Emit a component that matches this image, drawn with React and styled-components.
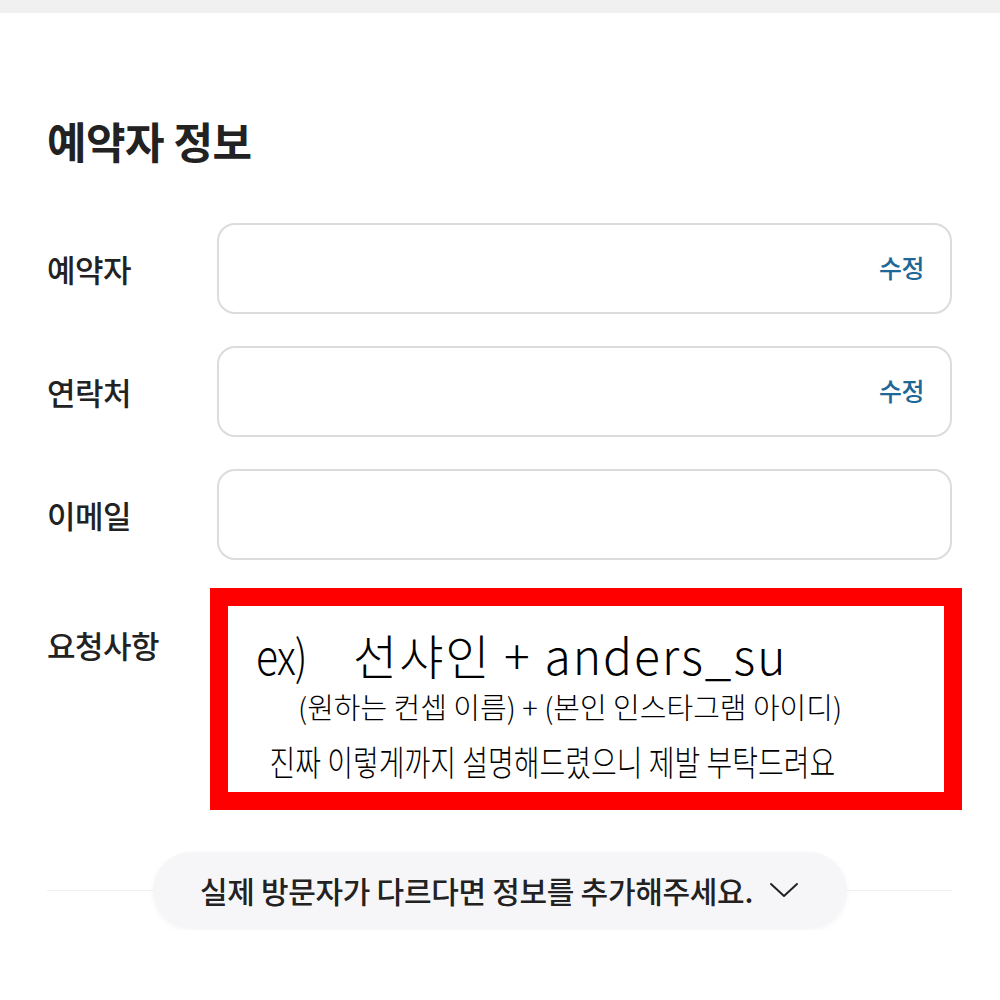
import React from 'react';
import styled, { createGlobalStyle } from 'styled-components';

const GlobalStyle = createGlobalStyle`
  html, body {
    margin: 0;
    padding: 0;
    background: #fff;
    font-family: "Noto Sans CJK KR", "Noto Sans", sans-serif;
    color: #222;
  }
`

const TopBar = styled.div`
  height: 13px;
  background: #f0f0f0;
`

const Page = styled.div`
  padding: 0 48px 0 47px;
`

const Title = styled.h2`
  margin: 0;
  padding-top: 98px;
  font-size: 43px;
  font-weight: 700;
  line-height: 58px;
  letter-spacing: -0.5px;
  color: #222;
`

const Form = styled.div`
  display: flex;
  flex-direction: column;
  gap: 32px;
  margin-top: 54px;
`

const Row = styled.div`
  display: grid;
  grid-template-columns: 170px 1fr;
  align-items: ${p => (p.$top ? 'start' : 'center')};
`

const Label = styled.div`
  font-size: 31px;
  font-weight: 500;
  letter-spacing: -0.5px;
  color: #222;
  padding-top: ${p => p.$pad || 0}px;
`

const Field = styled.div`
  height: 87px;
  border: 2px solid #dcdcdc;
  border-radius: 18px;
  display: flex;
  align-items: center;
  justify-content: flex-end;
  padding: 0 26px;
`

const EditLink = styled.span`
  font-size: 25px;
  font-weight: 500;
  color: #1d6896;
  letter-spacing: -0.5px;
  margin-top: -4px;
`

const Overlay = styled.div`
  margin: -4px -10px 0 -7px;
  border: 18px solid #ff0000;
  background: #fff;
  height: 186px;
  font-family: "Noto Sans CJK KR", sans-serif;
  font-weight: 300;
  color: #000;
  overflow: hidden;
`

const ExLine = styled.div`
  display: flex;
  align-items: baseline;
  padding: 22px 0 0 28px;
  font-size: 48px;
  line-height: 52px;
  white-space: nowrap;
`

const Ex = styled.span`
  font-size: 48px;
  font-weight: 300;
  display: inline-block;
  width: 97px;
  transform: scaleX(0.85);
  transform-origin: left;
  letter-spacing: -1px;
`

const Main = styled.span`
  letter-spacing: 2px;
`

const Sub = styled.div`
  padding-left: ${p => p.$left}px;
  font-size: ${p => p.$size}px;
  line-height: ${p => p.$lh}px;
  white-space: nowrap;
  transform: scaleX(${p => p.$sx || 1});
  transform-origin: left;
`

const Divider = styled.div`
  position: relative;
  margin-top: 40px;
  height: 80px;
  display: flex;
  justify-content: center;
  align-items: center;
  &::before {
    content: '';
    position: absolute;
    left: 0;
    right: 0;
    top: 50%;
    border-top: 1px solid #f0f0f0;
  }
`

const MoreButton = styled.button`
  position: relative;
  height: 77px;
  width: 694px;
  border: none;
  border-radius: 39px;
  background: #f6f6f8;
  box-shadow: 0 2px 6px rgba(0, 0, 0, 0.04);
  display: flex;
  align-items: center;
  justify-content: center;
  gap: 16px;
  font-family: "Noto Sans CJK KR", sans-serif;
  font-size: 30px;
  font-weight: 500;
  letter-spacing: -0.3px;
  color: #222;
  cursor: pointer;
`

const Chevron = () => (
  <svg width="30" height="18" viewBox="0 0 30 18" fill="none">
    <path d="M2 3 L15 15 L28 3" stroke="#222" strokeWidth="2" strokeLinecap="round" strokeLinejoin="round" />
  </svg>
)

export default function App() {
  return (
    <>
      <GlobalStyle />
      <TopBar />
      <Page>
        <Title>예약자 정보</Title>
        <Form>
          <Row>
            <Label>예약자</Label>
            <Field><EditLink>수정</EditLink></Field>
          </Row>
          <Row>
            <Label>연락처</Label>
            <Field><EditLink>수정</EditLink></Field>
          </Row>
          <Row>
            <Label>이메일</Label>
            <Field />
          </Row>
          <Row $top>
            <Label $pad={30}>요청사항</Label>
            <Overlay>
              <ExLine>
                <Ex>ex)</Ex>
                <Main>선샤인 + anders_su</Main>
              </ExLine>
              <Sub $left={70} $size={29} $lh={52}>(원하는 컨셉 이름) + (본인 인스타그램 아이디)</Sub>
              <Sub $left={52} $size={35} $lh={58} $sx={0.8}>진짜 이렇게까지 설명해드렸으니 제발 부탁드려요</Sub>
            </Overlay>
          </Row>
        </Form>
        <Divider>
          <MoreButton>
            실제 방문자가 다르다면 정보를 추가해주세요.
            <Chevron />
          </MoreButton>
        </Divider>
      </Page>
    </>
  );
}
